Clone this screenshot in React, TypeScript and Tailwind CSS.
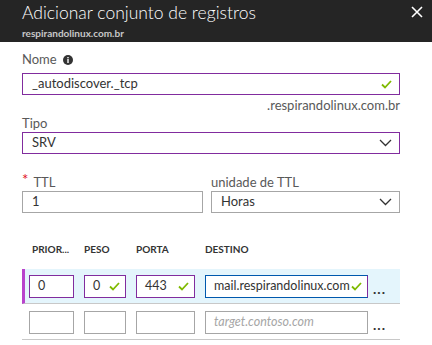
import React from 'react';

const font = { fontFamily: 'Lato, "Open Sans", sans-serif' };

const Check = () => (
  <svg width="11" height="9" viewBox="0 0 11 9" className="shrink-0">
    <path d="M1 4.5 L4 7.5 L10 1" fill="none" stroke="#7fba00" strokeWidth="1.8" />
  </svg>
);

const Chevron = () => (
  <svg width="13" height="8" viewBox="0 0 13 8" className="shrink-0">
    <path d="M1 1 L6.5 6.5 L12 1" fill="none" stroke="#333" strokeWidth="1.3" />
  </svg>
);

const Cell = ({ value, check, border, placeholder }: { value?: string; check?: boolean; border: string; placeholder?: string }) => (
  <div className={`h-[23px] bg-white border flex items-center pl-[8px] pr-[5px] ${border}`}>
    {value ? (
      <span className="flex-1 text-[12.5px] text-[#333] whitespace-nowrap">{value}</span>
    ) : (
      <span className="flex-1 text-[12.5px] text-[#a6a6a6] whitespace-nowrap italic">{placeholder}</span>
    )}
    {check && <Check />}
  </div>
);

const cols = 'grid grid-cols-[45px_42px_59px_163px_1fr] gap-x-[10px]';

export default function App() {
  return (
    <div className="w-[432px] h-[345px] bg-white overflow-hidden" style={font}>
      <div className="h-[42px] bg-[#252525] px-[22px] relative">
        <div className="text-[17.5px] font-light text-white leading-[22px] pt-[2px]">Adicionar conjunto de registros</div>
        <div className="text-[10px] font-bold text-[#c8c8c8] leading-[12px] mt-[3px]">respirandolinux.com.br</div>
        <svg width="12" height="12" viewBox="0 0 12 12" className="absolute right-[9px] top-[6px]">
          <path d="M1 1 L11 11 M11 1 L1 11" stroke="#fff" strokeWidth="1.6" />
        </svg>
      </div>

      <div className="pl-[22px] pr-[32px]">
        <div className="flex items-center gap-[6px] mt-[10px] h-[16px] text-[13px] text-[#595959]">
          Nome
          <svg width="10" height="10" viewBox="0 0 10 10">
            <circle cx="5" cy="5" r="5" fill="#333" />
            <rect x="4.3" y="4" width="1.4" height="4" fill="#fff" />
            <rect x="4.3" y="2" width="1.4" height="1.3" fill="#fff" />
          </svg>
        </div>
        <div className="mt-[5px] h-[22px] border border-[#812c9e] flex items-center pl-[9px] pr-[7px]">
          <span className="flex-1 text-[13px] text-[#333]">_autodiscover._tcp</span>
          <Check />
        </div>
        <div className="text-right text-[13px] text-[#595959] leading-[16px] mt-[2px]">.respirandolinux.com.br</div>

        <div className="text-[13px] text-[#595959] leading-[16px] mt-[2px]">Tipo</div>
        <div className="mt-[1px] h-[22px] border border-[#812c9e] flex items-center pl-[9px] pr-[7px]">
          <span className="flex-1 text-[13px] text-[#333]">SRV</span>
          <Chevron />
        </div>

        <div className="flex gap-[8px] mt-[20px]">
          <div className="w-[181px]">
            <div className="flex items-center h-[16px] text-[13px] text-[#595959] leading-[16px]">
              <span className="text-[#e00b1c] text-[15px] leading-[10px] mr-[5px] relative -top-[3px]">*</span>TTL
            </div>
            <div className="mt-[1px] h-[22px] border border-[#a6a6a6] flex items-center pl-[9px]">
              <span className="text-[13px] text-[#333]">1</span>
            </div>
          </div>
          <div className="flex-1">
            <div className="h-[16px] text-[13px] text-[#595959] leading-[16px]">unidade de TTL</div>
            <div className="mt-[1px] h-[22px] border border-[#a6a6a6] flex items-center pl-[9px] pr-[7px]">
              <span className="flex-1 text-[13px] text-[#333]">Horas</span>
              <Chevron />
            </div>
          </div>
        </div>

        <div className={`${cols} pl-[7px] mt-[28px] h-[16px] text-[10px] font-bold text-[#333] leading-[16px]`}>
          <span className="pl-[3px]">PRIOR...</span>
          <span>PESO</span>
          <span>PORTA</span>
          <span>DESTINO</span>
        </div>

        <div className={`${cols} items-center mt-[12px] bg-[#e4f5fc] border-l-[3px] border-l-[#b843cc] border-b border-b-[#c8c8c8] pl-[4px] pt-[6px] pb-[5px]`}>
          <Cell value="0" border="border-[#812c9e]" />
          <Cell value="0" check border="border-[#812c9e]" />
          <Cell value="443" check border="border-[#812c9e]" />
          <Cell value="mail.respirandolinux.com" check border="border-[#0058ad] border-r-[#812c9e]" />
          <span className="text-[14px] font-bold text-[#333] leading-[14px] -ml-[5px] pt-[4px] tracking-[1px]">...</span>
        </div>

        <div className={`${cols} items-center border-b border-b-[#c8c8c8] pl-[7px] pt-[7px] pb-[5px]`}>
          <Cell border="border-[#a6a6a6]" />
          <Cell border="border-[#a6a6a6]" />
          <Cell border="border-[#a6a6a6]" />
          <Cell border="border-[#a6a6a6]" placeholder="target.contoso.com" />
          <span className="text-[14px] font-bold text-[#333] leading-[14px] -ml-[5px] pt-[4px] tracking-[1px]">...</span>
        </div>
      </div>
    </div>
  );
}
